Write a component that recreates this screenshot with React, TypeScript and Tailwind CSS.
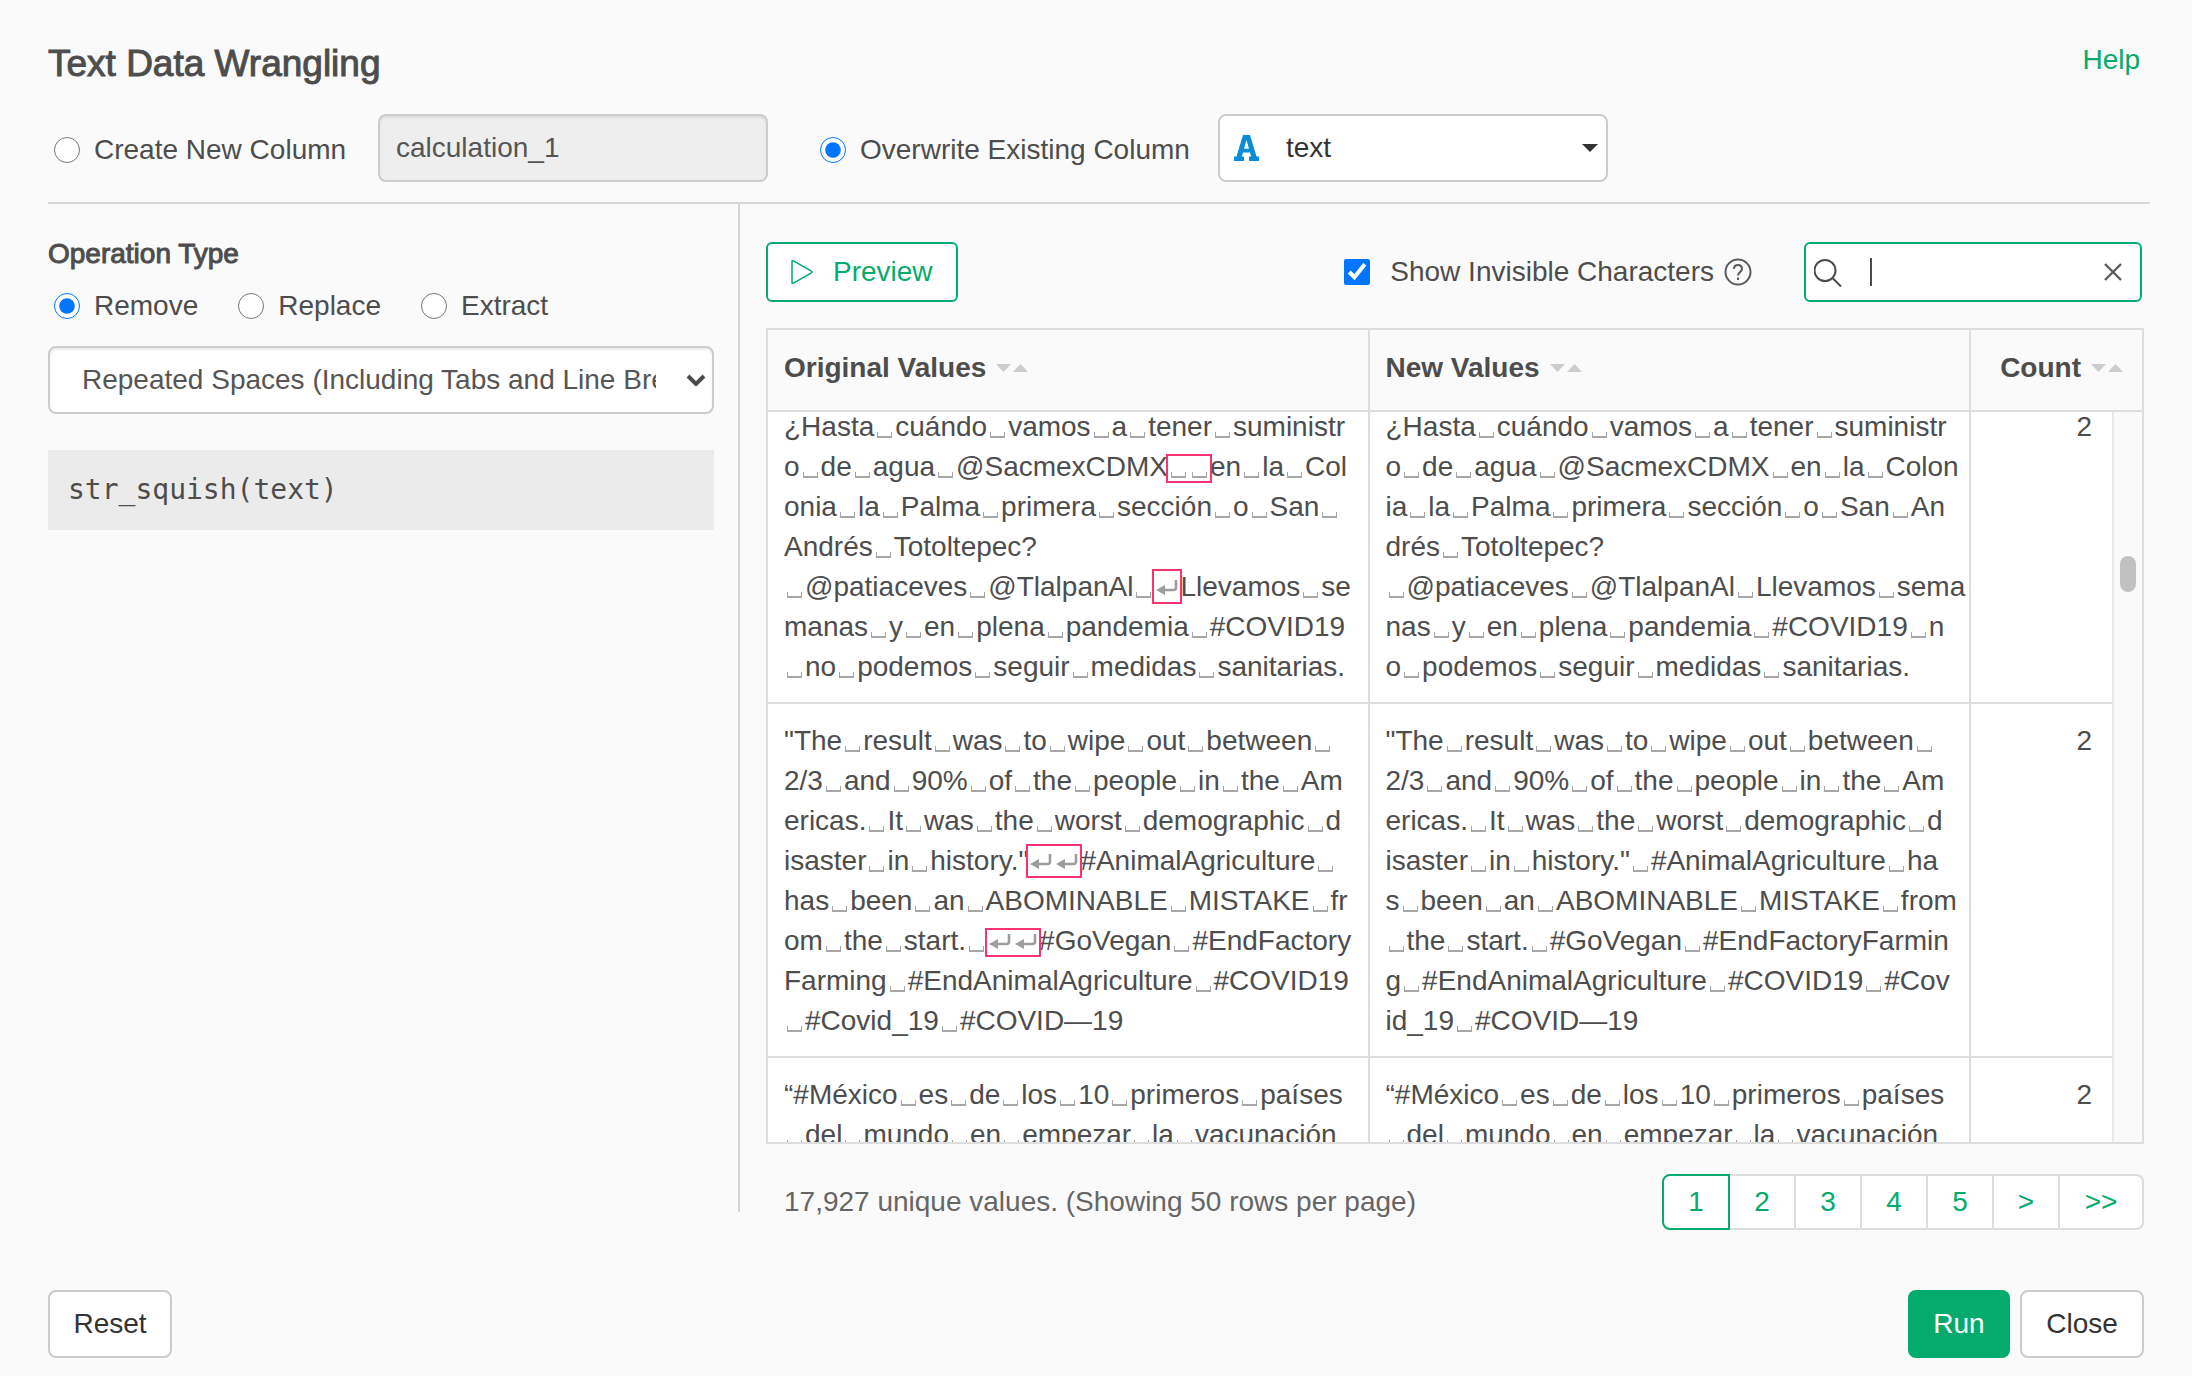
import React, { useLayoutEffect, useRef, useState } from "react";

/* Cell text markup: a plain space is a visible-space mark, "~" is a line-feed
   mark, and [..] {..} <..> enclose a highlighted run (short, medium, tall). */

const rows = [
  {
    original: [
      "¿Hasta cuándo vamos a tener suministr",
      "o de agua @SacmexCDMX[  ]en la Col",
      "onia la Palma primera sección o San ",
      "Andrés Totoltepec?",
      " @patiaceves @TlalpanAl <~>Llevamos se",
      "manas y en plena pandemia #COVID19",
      " no podemos seguir medidas sanitarias.",
    ],
    updated: [
      "¿Hasta cuándo vamos a tener suministr",
      "o de agua @SacmexCDMX en la Colon",
      "ia la Palma primera sección o San An",
      "drés Totoltepec?",
      " @patiaceves @TlalpanAl Llevamos sema",
      "nas y en plena pandemia #COVID19 n",
      "o podemos seguir medidas sanitarias.",
    ],
    count: 2,
  },
  {
    original: [
      '"The result was to wipe out between ',
      "2/3 and 90% of the people in the Am",
      "ericas. It was the worst demographic d",
      'isaster in history."{~~}#AnimalAgriculture ',
      "has been an ABOMINABLE MISTAKE fr",
      "om the start. [~~]#GoVegan #EndFactory",
      "Farming #EndAnimalAgriculture #COVID19",
      " #Covid_19 #COVID—19",
    ],
    updated: [
      '"The result was to wipe out between ',
      "2/3 and 90% of the people in the Am",
      "ericas. It was the worst demographic d",
      'isaster in history." #AnimalAgriculture ha',
      "s been an ABOMINABLE MISTAKE from",
      " the start. #GoVegan #EndFactoryFarmin",
      "g #EndAnimalAgriculture #COVID19 #Cov",
      "id_19 #COVID—19",
    ],
    count: 2,
  },
  {
    original: ["“#México es de los 10 primeros países", " del mundo en empezar la vacunación"],
    updated: ["“#México es de los 10 primeros países", " del mundo en empezar la vacunación"],
    count: 2,
  },
];

function SpaceMark() {
  return (
    <span className="mx-[3px] -mb-0.5 inline-block h-1.5 w-[15px] overflow-hidden whitespace-pre border-x border-b-2 border-[#a6a6a6] leading-none">
      {" "}
    </span>
  );
}

function ReturnMark() {
  return (
    <svg viewBox="0 0 22 16" className="mx-0.5 inline h-4 w-[22px] align-baseline" aria-label="line feed">
      <path d="M20 0v7.5a2.5 2.5 0 0 1-2.5 2.5H7" fill="none" stroke="#9d9d9d" strokeWidth="2.6" />
      <path d="M0 10 9 5v10z" fill="#9d9d9d" />
    </svg>
  );
}

const highlight: Record<string, string> = {
  "[": "text-[22px] leading-none outline-2 outline-[#f8336f]",
  "{": "text-[26px] leading-none outline-2 outline-[#f8336f]",
  "<": "text-[28px] leading-none outline-2 outline-[#f8336f]",
};

function marks(text: string) {
  return text.split(/([ ~])/).map((part, i) =>
    part === " " ? <SpaceMark key={i} /> : part === "~" ? <ReturnMark key={i} /> : part,
  );
}

function Line({ text }: { text: string }) {
  return (
    <div>
      {text.split(/([[{<][ ~]+[\]}>])/).map((part, i) =>
        i % 2 ? (
          <span key={i} className={highlight[part[0]]}>
            {marks(part.slice(1, -1))}
          </span>
        ) : (
          <React.Fragment key={i}>{marks(part)}</React.Fragment>
        ),
      )}
    </div>
  );
}

function SortIcon() {
  return (
    <svg viewBox="0 0 32 8" className="inline h-2 w-8 align-baseline" fill="#ccc" aria-hidden="true">
      <path d="M0 0h15L7.5 8z" />
      <path d="M17 8h15L24.500 0z" />
    </svg>
  );
}

function Heading({ label, right }: { label: string; right?: boolean }) {
  return (
    <button className={right ? "flex w-full items-center justify-end gap-2.5 font-bold" : "flex items-center gap-2.5 font-bold"}>
      {label}
      <SortIcon />
    </button>
  );
}

function Radio({ name, label, checked, onChange }: { name: string; label: string; checked: boolean; onChange: () => void }) {
  return (
    <label className="flex items-center gap-3.5">
      <input type="radio" name={name} checked={checked} onChange={onChange} className="size-[26px]" />
      <span>{label}</span>
    </label>
  );
}

const pages = ["1", "2", "3", "4", "5", ">", ">>"];

export default function App() {
  const [target, setTarget] = useState("overwrite");
  const [operation, setOperation] = useState("Remove");
  const [invisible, setInvisible] = useState(true);
  const scroller = useRef<HTMLDivElement>(null);

  useLayoutEffect(() => {
    if (scroller.current) scroller.current.scrollTop = 22;
  }, []);

  return (
    <div className="flex h-screen min-h-[900px] flex-col bg-[#fafafa] pt-11 pr-[42px] pb-[18px] pl-12 font-['Liberation_Sans',Arial,sans-serif] text-[28px] leading-10 text-[#4d4d4d]">
      <header className="border-b-2 border-[#d6d6d6] pb-5">
        <div className="flex items-start justify-between pr-2.5">
          <h1 className="text-[37px] leading-10 [-webkit-text-stroke:1px_#4d4d4d]">Text Data Wrangling</h1>
          <a href="#help" className="leading-8 text-[#05ab6c]">
            Help
          </a>
        </div>
        <div className="mt-[30px] flex items-center">
          <div className="w-[330px] pt-1 pl-1.5">
            <Radio name="target" label="Create New Column" checked={target === "create"} onChange={() => setTarget("create")} />
          </div>
          <input
            aria-label="New column name"
            disabled
            defaultValue="calculation_1"
            className="h-[68px] w-[390px] rounded-lg border-2 border-[#ccc] bg-[#eee] px-4 text-[#555] shadow-[inset_0_2px_2px_rgba(0,0,0,0.075)]"
          />
          <div className="w-[450px] pt-1 pl-[52px]">
            <Radio
              name="target"
              label="Overwrite Existing Column"
              checked={target === "overwrite"}
              onChange={() => setTarget("overwrite")}
            />
          </div>
          <div className="relative h-[68px] w-[390px]">
            <select
              aria-label="Existing column"
              className="size-full appearance-none rounded-lg border-2 border-[#ccc] bg-white pr-12 pl-[66px] text-[#333]"
            >
              <option>text</option>
            </select>
            <svg viewBox="0 0 25 26" className="pointer-events-none absolute top-[21px] left-4 h-[26px] w-[25px]" aria-hidden="true">
              <path
                d="M9 0h7l6.500 21.500H25V26H15v-4.500h2.200L16 17.500H9l-1.200 4H10V26H0v-4.500h2.500zM12.500 5 10 13.800h5z"
                fill="#0a8dd6"
                fillRule="evenodd"
              />
            </svg>
            <svg viewBox="0 0 16 8" className="pointer-events-none absolute top-[30px] right-2.5 h-2 w-4" fill="#333" aria-hidden="true">
              <path d="M0 0h16L8 8z" />
            </svg>
          </div>
        </div>
      </header>

      <div className="flex min-h-0 flex-1 pr-1.5">
        <aside className="mb-[18px] w-[692px] shrink-0 border-r-2 border-[#d6d6d6] pt-[30px] pr-6">
          <h2 className="[-webkit-text-stroke:1px_#4d4d4d]">Operation Type</h2>
          <div className="mt-3 flex gap-10 pl-1.5">
            {["Remove", "Replace", "Extract"].map((name) => (
              <Radio key={name} name="operation" label={name} checked={operation === name} onChange={() => setOperation(name)} />
            ))}
          </div>
          <div className="relative mt-5 h-[68px]">
            <select
              aria-label="Text to remove"
              className="size-full appearance-none rounded-lg border-2 border-[#ccc] bg-white pr-14 pl-8 text-[#555] shadow-[inset_0_2px_2px_rgba(0,0,0,0.075)]"
            >
              <option>Repeated Spaces (Including Tabs and Line Breaks)</option>
            </select>
            <svg viewBox="0 0 20 12" className="pointer-events-none absolute top-7 right-2 h-3 w-5" aria-hidden="true">
              <path d="M2 2l8 8 8-8" fill="none" stroke="#4d4d4d" strokeWidth="4" />
            </svg>
          </div>
          <pre className="mt-9 bg-[#ebebeb] px-5 py-5 font-['DejaVu_Sans_Mono',monospace] text-[28px] leading-10">str_squish(text)</pre>
        </aside>

        <main className="flex min-w-0 flex-1 flex-col pt-[38px] pl-[26px]">
          <div className="flex items-center pr-0.5">
            <button className="flex h-[60px] w-48 items-center rounded-md border-2 border-[#05ab6c] bg-white pl-[23px] text-[#05ab6c]">
              <svg viewBox="0 0 22 26" className="mr-5 h-[26px] w-[22px]" aria-hidden="true">
                <path d="M1 2.500v21q0 1.500 1.400.7l18-10.200q1-1 0-2L2.400 1.800Q1 1 1 2.500z" fill="none" stroke="#05ab6c" strokeWidth="1.500" />
              </svg>
              Preview
            </button>
            <label className="ml-auto flex items-center gap-5">
              <input type="checkbox" checked={invisible} onChange={() => setInvisible(!invisible)} className="size-[26px]" />
              Show Invisible Characters
            </label>
            <svg viewBox="0 0 28 28" className="mr-[52px] ml-2.5 size-7" fill="none" stroke="#5c5c5c" strokeWidth="2" aria-label="About invisible characters">
              <circle cx="14" cy="14" r="12.500" />
              <path d="M10 11c0-5.200 8-5.200 8 0 0 3-4 3.300-4 6.500" />
              <path d="M14 19.500v2.500" />
            </svg>
            <div className="flex h-[60px] w-[338px] items-center rounded-md border-2 border-[#05ab6c] bg-white pr-[18px] pl-2">
              <svg viewBox="0 0 28 30" className="h-[30px] w-7 shrink-0" fill="none" stroke="#4d4d4d" strokeWidth="2" aria-hidden="true">
                <circle cx="11" cy="13.500" r="10.500" />
                <path d="M18.500 21l8.500 8.500" />
              </svg>
              <span className="ml-7 h-7 w-0.5 shrink-0 bg-[#4d4d4d]" />
              <input type="text" aria-label="Search values" className="min-w-0 flex-1 caret-transparent outline-none" />
              <button aria-label="Clear search">
                <svg viewBox="0 0 18 18" className="size-[18px]" fill="none" stroke="#5c5c5c" strokeWidth="2.400" aria-hidden="true">
                  <path d="M1 1l16 16M17 1L1 17" />
                </svg>
              </button>
            </div>
          </div>

          <div className="mt-[26px] flex min-h-0 flex-1 flex-col border-2 border-[#ddd]">
            <table className="w-full table-fixed border-separate border-spacing-0">
              <colgroup>
                <col />
                <col />
                <col className="w-[171px]" />
              </colgroup>
              <thead>
                <tr>
                  <th className="h-[82px] border-r-2 border-b-2 border-[#ddd] pr-4 pb-1 pl-4">
                    <Heading label="Original Values" />
                  </th>
                  <th className="border-r-2 border-b-2 border-[#ddd] pr-4 pb-1 pl-4">
                    <Heading label="New Values" />
                  </th>
                  <th className="border-b-2 border-[#ddd] pr-[19px] pb-1">
                    <Heading label="Count" right />
                  </th>
                </tr>
              </thead>
            </table>
            <div className="flex min-h-0 flex-1 bg-white">
              <div ref={scroller} className="min-w-0 flex-1 overflow-hidden">
                <table className="w-full table-fixed border-separate border-spacing-0">
                  <colgroup>
                    <col />
                    <col />
                    <col className="w-[141px]" />
                  </colgroup>
                  <tbody>
                    {rows.map((row, i) => (
                      <tr key={i} className="align-top">
                        <td className="border-r-2 border-b-2 border-[#ddd] pt-[17px] pb-[15px] pl-4 whitespace-nowrap">
                          {row.original.map((line) => (
                            <Line key={line} text={line} />
                          ))}
                        </td>
                        <td className="border-r-2 border-b-2 border-[#ddd] pt-[17px] pb-[15px] pl-4 whitespace-nowrap">
                          {row.updated.map((line) => (
                            <Line key={line} text={line} />
                          ))}
                        </td>
                        <td className="border-b-2 border-[#ddd] pt-[17px] pb-[15px] pr-5 text-right">{row.count}</td>
                      </tr>
                    ))}
                  </tbody>
                </table>
              </div>
              <div className="flex w-[30px] justify-center border-l-2 border-[#e8e8e8] bg-[#fafafa] pt-36">
                <div className="h-9 w-4 rounded-full bg-[#c1c1c1]" />
              </div>
            </div>
          </div>

          <div className="mt-[30px] flex items-center justify-between">
            <p className="pl-[18px] text-[#666]">17,927 unique values. (Showing 50 rows per page)</p>
            <nav aria-label="Pages" className="flex h-14 text-[#05ab6c]">
              {pages.map((page, i) => (
                <button
                  key={page}
                  className={
                    i === 0
                      ? "w-[68px] rounded-l-lg border-2 border-[#05ab6c] bg-white"
                      : i === 6
                        ? "w-[84px] rounded-r-lg border-y-2 border-r-2 border-[#ddd] bg-white"
                        : "w-[66px] border-y-2 border-r-2 border-[#ddd] bg-white"
                  }
                >
                  {page}
                </button>
              ))}
            </nav>
          </div>
        </main>
      </div>

      <footer className="mt-[60px] flex gap-2.5 pr-1.5">
        <button className="mr-auto h-[68px] w-[124px] rounded-lg border-2 border-[#ccc] bg-white text-[#333]">Reset</button>
        <button className="h-[68px] w-[102px] rounded-lg bg-[#05ab6c] text-white">Run</button>
        <button className="h-[68px] w-[124px] rounded-lg border-2 border-[#ccc] bg-white text-[#333]">Close</button>
      </footer>
    </div>
  );
}
